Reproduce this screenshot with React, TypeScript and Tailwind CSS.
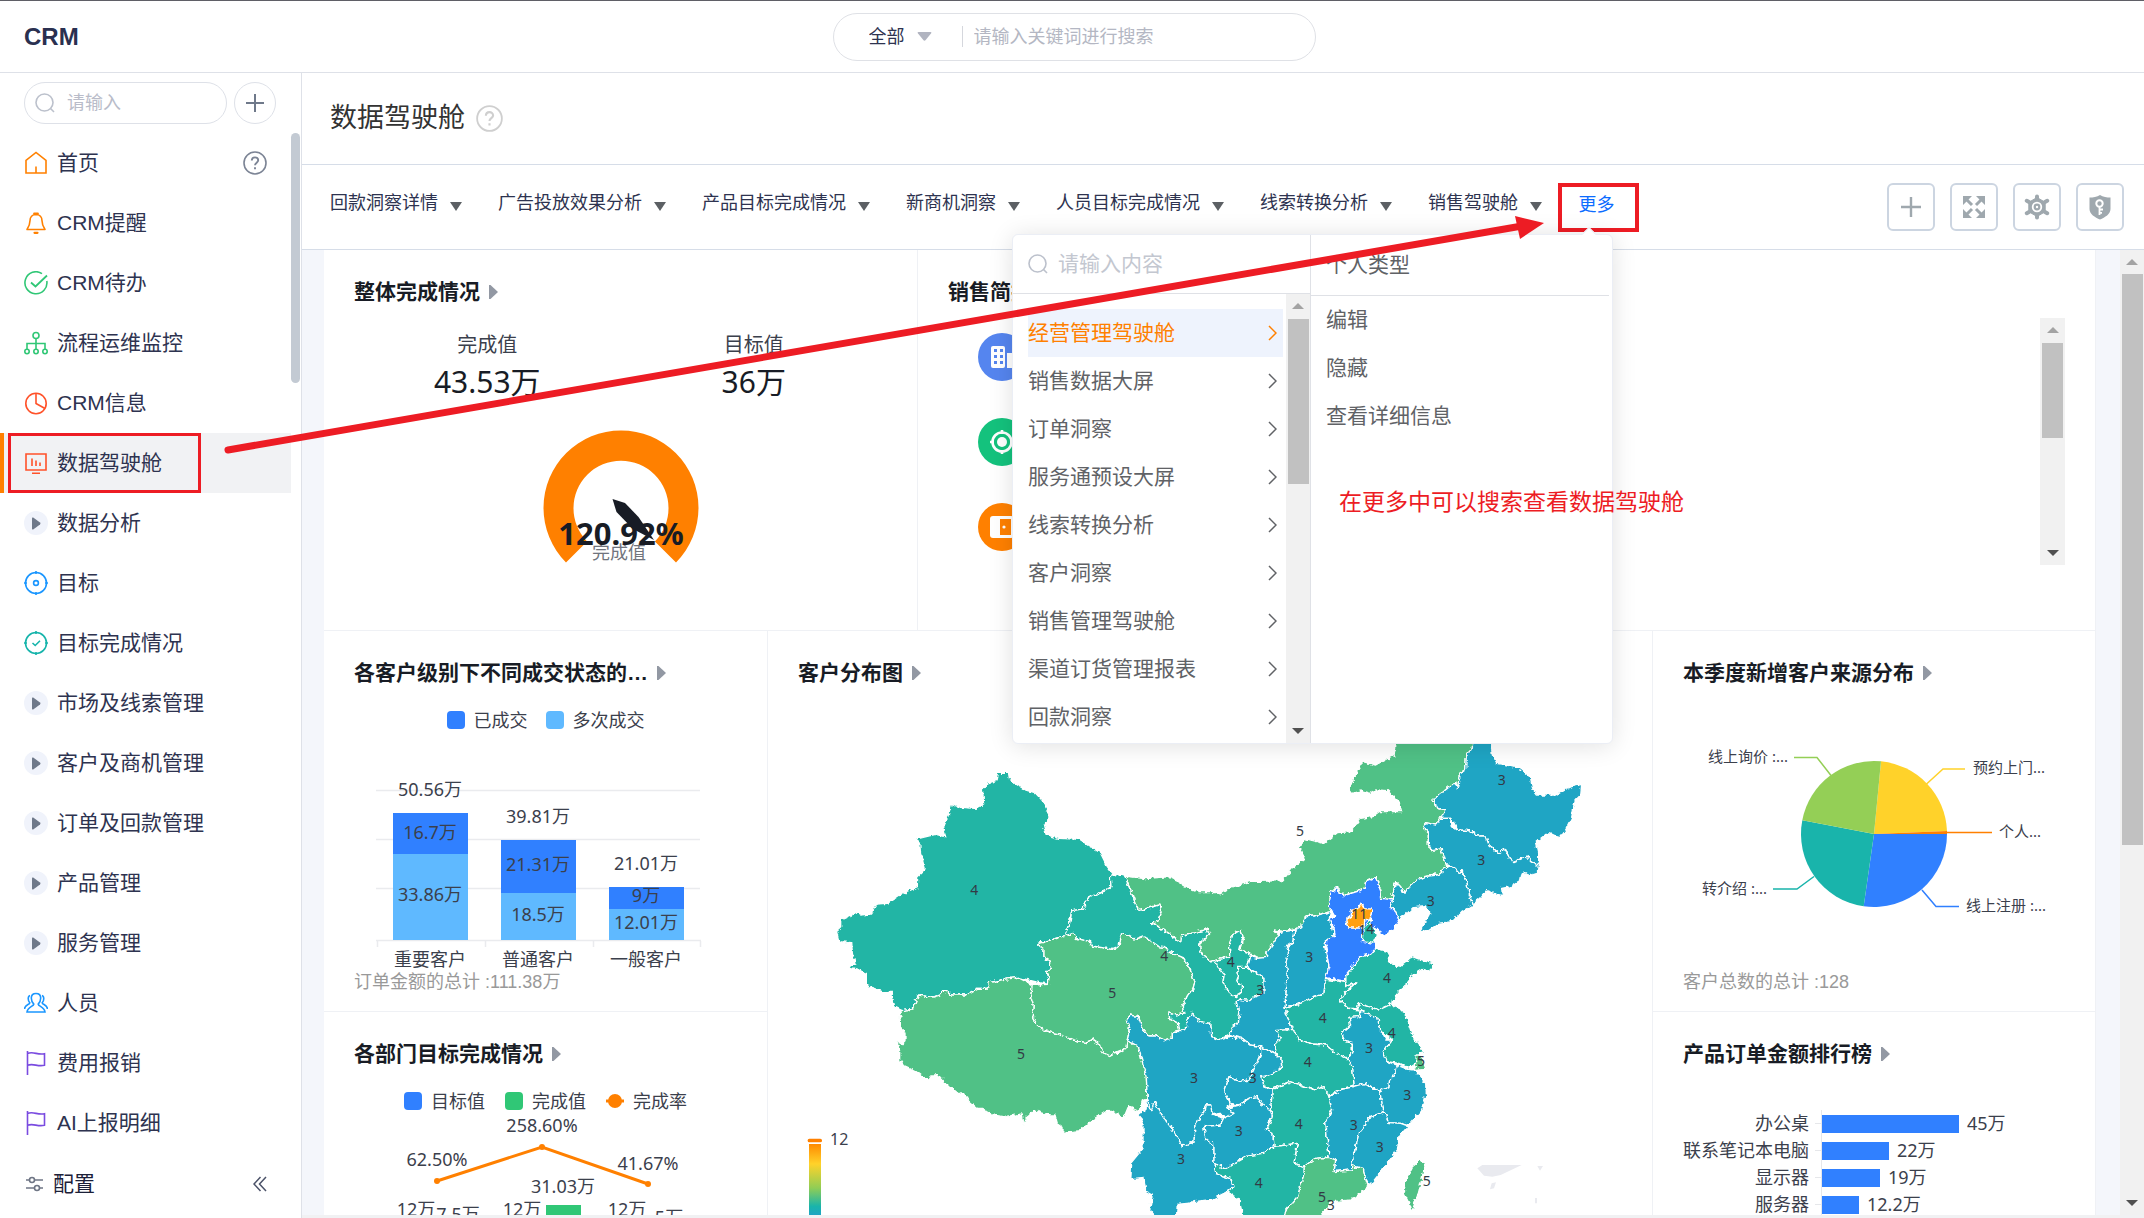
import type { ReactNode } from 'react';

type MenuItem = { label: string; icon: ReactNode; active?: boolean; help?: boolean };

const chartFont = "font-['Noto_Sans','Noto_Sans_CJK_SC',sans-serif]";

/* Icons */
function Stroke({ color, children }: { color: string; children: ReactNode }) {
  return (
    <svg width="24" height="24" viewBox="0 0 24 24" fill="none" stroke={color} strokeWidth="1.6" className="shrink-0">
      {children}
    </svg>
  );
}

const home = <Stroke color="#ff8000"><path d="M2 22V9.5L12 1.5l10 8V22H2ZM12 15.5V22" /></Stroke>;
const bell = (
  <Stroke color="#ff8000">
    <path d="M12 3.500c-3.800 0-6 2.800-6 6.300 0 4-1.200 6-3 8.700h18c-1.800-2.700-3-4.700-3-8.700 0-3.500-2.200-6.300-6-6.300Z" strokeLinejoin="round" />
    <path d="M10.200 2.600h3.600M10.500 21.800h3" strokeWidth="2.200" strokeLinecap="round" />
  </Stroke>
);
const check = (
  <Stroke color="#30c776">
    <path d="M18 2.600A11 11 0 1 0 22.800 10" />
    <path d="m7 11.500 4.500 4L23 4.500" strokeWidth="1.800" />
  </Stroke>
);
const flow = (
  <Stroke color="#30c776">
    <circle cx="12" cy="4.500" r="3" />
    <circle cx="3" cy="20.500" r="2.200" />
    <circle cx="12" cy="20.500" r="2.200" />
    <circle cx="21" cy="20.500" r="2.200" />
    <path d="M12 7.500v10.800M3 18.300V12.500h18v5.800" />
  </Stroke>
);
const pie = <Stroke color="#ff522a"><circle cx="12" cy="12.500" r="10.200" /><path d="M12 2.500v10l9 5" /></Stroke>;
const board = (
  <Stroke color="#ff522a">
    <path d="M2 3h20v16H2zM8 22.200h8M8 7.500v7.500M12 9.500v5.500M16 11.500v3.500" />
  </Stroke>
);
const target = (
  <Stroke color="#1a96ff">
    <circle cx="12" cy="12" r="10.500" />
    <circle cx="12" cy="12" r="2.400" />
    <path d="M12 0v3M12 21v3M0 12h3M21 12h3" />
  </Stroke>
);
const targetDone = (
  <Stroke color="#16b4ab">
    <circle cx="12" cy="12" r="10.500" />
    <path d="m8.500 12 2.700 2.500L16 9.700M12 0v3M12 21v3M0 12h3M21 12h3" />
  </Stroke>
);
const people = (
  <Stroke color="#1a96ff">
    <path d="M12 2.500c-3 0-4.700 2-4.700 4.600 0 2.700 1 4.600 2.500 6-.2 2.300-6.300 2.600-6.800 7.900h18c-.5-5.300-6.600-5.600-6.800-7.900 1.500-1.400 2.500-3.300 2.500-6 0-2.600-1.700-4.600-4.700-4.600Z" />
    <path d="M6 4.500C3.800 5 3.600 9.800 5.800 11.800 5.500 13.800.8 13.500.5 18M18 4.500c2.200.5 2.400 5.300.2 7.300.3 2 5 1.700 5.300 6.200" />
  </Stroke>
);
const flag = (
  <Stroke color="#7a4be0">
    <path d="M3.500 0v24M3.500 2.500c6-2.500 10 1.800 17 .2v11.500c-7 1.800-11-2.200-17 .1" />
  </Stroke>
);
const fold = (
  <span className="flex h-6 w-6 shrink-0 items-center justify-center rounded-full bg-[#f0f3fb]">
    <svg width="9" height="13" viewBox="0 0 9 13" fill="#6f798a"><path d="M0 1.200Q0 0 1.200.6L8 5.600q1 .9 0 1.800L1.200 12.400Q0 13 0 11.800Z" /></svg>
  </span>
);

function Help({ size, color }: { size: string; color: string }) {
  return (
    <svg className={size} viewBox="0 0 24 24" fill="none" stroke={color} strokeWidth="1.600">
      <circle cx="12" cy="12" r="11" />
      <path d="M8.800 9.600c0-4.400 6.400-4.200 6.400-.3 0 2.300-3.200 2.500-3.200 5M12 16.200v2" strokeWidth="1.900" />
    </svg>
  );
}

function SearchIcon() {
  return (
    <svg width="20" height="20" viewBox="0 0 20 20" fill="none" stroke="#bcc1cc" strokeWidth="1.600" className="shrink-0">
      <circle cx="9.500" cy="9.500" r="8.500" />
      <path d="m15.500 15.500 3.500 3.500" />
    </svg>
  );
}

function Caret({ dir, color }: { dir: 'up' | 'down'; color: string }) {
  return (
    <svg width="12" height="8" viewBox="0 0 12 8" fill={color} className="shrink-0">
      {dir === 'up' ? <path d="M0 7h12L6 1z" /> : <path d="M0 1h12L6 7z" />}
    </svg>
  );
}

const menu: MenuItem[] = [
  { label: '首页', icon: home, help: true },
  { label: 'CRM提醒', icon: bell },
  { label: 'CRM待办', icon: check },
  { label: '流程运维监控', icon: flow },
  { label: 'CRM信息', icon: pie },
  { label: '数据驾驶舱', icon: board, active: true },
  { label: '数据分析', icon: fold },
  { label: '目标', icon: target },
  { label: '目标完成情况', icon: targetDone },
  { label: '市场及线索管理', icon: fold },
  { label: '客户及商机管理', icon: fold },
  { label: '订单及回款管理', icon: fold },
  { label: '产品管理', icon: fold },
  { label: '服务管理', icon: fold },
  { label: '人员', icon: people },
  { label: '费用报销', icon: flag },
  { label: 'AI上报明细', icon: flag },
];

const tabs = ['回款洞察详情', '广告投放效果分析', '产品目标完成情况', '新商机洞察', '人员目标完成情况', '线索转换分析', '销售驾驶舱'];

const boards = ['经营管理驾驶舱', '销售数据大屏', '订单洞察', '服务通预设大屏', '线索转换分析', '客户洞察', '销售管理驾驶舱', '渠道订货管理报表', '回款洞察'];

const ranking = [
  { name: '办公桌', value: 45, text: '45万' },
  { name: '联系笔记本电脑', value: 22, text: '22万' },
  { name: '显示器', value: 19, text: '19万' },
  { name: '服务器', value: 12.2, text: '12.2万' },
];

function Sidebar() {
  return (
    <aside className="relative flex w-[302px] shrink-0 flex-col border-r border-[#dee1e8] bg-white">
      <div className="flex gap-[7px] pt-[9px] pl-6">
        <label className="flex h-[42px] w-[203px] items-center gap-3 rounded-full border border-[#dee1e8] pl-[10px]">
          <SearchIcon />
          <input
            aria-label="搜索菜单"
            placeholder="请输入"
            className="w-[120px] text-lg outline-none placeholder:text-[#b9bcc9]"
          />
        </label>
        <button aria-label="新增" className="flex h-[42px] w-[42px] items-center justify-center rounded-full border border-[#dee1e8]">
          <svg width="18" height="18" viewBox="0 0 18 18" stroke="#6f798a" strokeWidth="2"><path d="M9 0v18M0 9h18" /></svg>
        </button>
      </div>

      <nav className="mt-[9px] min-h-0 flex-1 overflow-hidden">
        {menu.map(m => (
          <a
            key={m.label}
            href="#"
            className={
              m.active
                ? 'relative mr-[10px] flex h-[60px] items-center gap-[9px] border-l-4 border-[#ff8000] bg-[#f1f2f4] pl-5 text-[21px] text-[#2e3350]'
                : 'flex h-[60px] items-center gap-[9px] pl-6 text-[21px] text-[#2e3350]'
            }
          >
            {m.icon}
            {m.label}
            {m.help && <span className="ml-auto pr-[34px]"><Help size="h-6 w-6" color="#7c8495" /></span>}
            {m.active && <span className="absolute inset-y-0 left-1 w-[193px] border-[3px] border-[#ed1c24]" />}
          </a>
        ))}
      </nav>

      <div className="flex h-[65px] shrink-0 items-center justify-between pr-[34px] pb-1 pl-[26px] text-[21px] text-[#1b2038]">
        <a href="#" className="flex items-center gap-[10px]">
          <svg width="17" height="16" viewBox="0 0 17 16" fill="none" stroke="#6f7685" strokeWidth="1.600">
            <circle cx="6" cy="4" r="2.500" />
            <circle cx="11" cy="12" r="2.500" />
            <path d="M0 4h3.500M8.500 4H17M0 12h8.500M13.500 12H17" />
          </svg>
          配置
        </a>
        <button aria-label="收起">
          <svg width="14" height="16" viewBox="0 0 14 16" fill="none" stroke="#4b5268" strokeWidth="1.500"><path d="M7.500 1 1 8l6.500 7M13 1 6.500 8l6.500 7" /></svg>
        </button>
      </div>
      <div className="absolute top-[60px] right-px h-[250px] w-[9px] rounded-full bg-[#c3cad3]" />
    </aside>
  );
}

function MorePanel() {
  return (
    <div className="absolute top-[47px] right-[22px] z-20 flex h-[510px] w-[601px] rounded-md border border-[#ebeef5] bg-white text-[21px] text-[#606266] shadow-[0_2px_24px_rgba(0,0,0,0.12)]">
      <span className="absolute -top-[6px] right-[18px] h-[10px] w-[10px] rotate-45 border-t border-l border-[#ebeef5] bg-white" />
      <div className="flex w-[298px] shrink-0 flex-col border-r border-[#dfe1e6]">
        <label className="flex h-[59px] shrink-0 items-center gap-[10px] border-b border-[#dfe1e6] pl-[15px]">
          <SearchIcon />
          <input aria-label="搜索驾驶舱" placeholder="请输入内容" className="w-[200px] outline-none placeholder:text-[#c3c7d0]" />
        </label>
        <div className="flex min-h-0 flex-1">
          <ul className="flex-1 pt-[15px] pr-[3px] pl-[15px]">
            {boards.map((b, i) => (
              <li key={b}>
                <button
                  className={
                    i === 0
                      ? 'flex h-12 w-full items-center justify-between bg-[#eef3fd] pr-[6px] text-[#ff8000]'
                      : 'flex h-12 w-full items-center justify-between pr-[6px]'
                  }
                >
                  {b}
                  <svg width="9" height="16" viewBox="0 0 9 16" fill="none" stroke="currentColor" strokeWidth="1.500"><path d="m1 1 7 7-7 7" /></svg>
                </button>
              </li>
            ))}
          </ul>
          <div className="flex w-[24px] flex-col items-center bg-[#f1f1f1] py-2">
            <Caret dir="up" color="#a3a3a3" />
            <div className="mt-[9px] h-[165px] w-[21px] bg-[#c1c1c1]" />
            <div className="mt-auto flex"><Caret dir="down" color="#505050" /></div>
          </div>
        </div>
      </div>
      <div className="min-w-0 flex-1 pr-[3px]">
        <div className="flex h-[61px] items-center border-b border-[#dfe1e6] pl-[15px]">个人类型</div>
        <ul className="pl-[15px]">
          {['编辑', '隐藏', '查看详细信息'].map(t => (
            <li key={t} className="flex h-12 items-center">{t}</li>
          ))}
        </ul>
        <p className="mt-[46px] ml-7 text-[23px] leading-8 whitespace-nowrap text-[#ed1c24]">在更多中可以搜索查看数据驾驶舱</p>
      </div>
    </div>
  );
}

function Toolbar() {
  const box = 'flex h-12 w-12 items-center justify-center rounded-md border-2 border-[#ccd5e1]';
  return (
    <div className="ml-auto flex gap-[15px] pr-5">
      <button aria-label="新建" className={box}>
        <svg width="22" height="22" viewBox="0 0 22 22" stroke="#9fa8ae" strokeWidth="2.400"><path d="M11 1v20M1 11h20" /></svg>
      </button>
      <button aria-label="全屏" className={box}>
        <svg width="22" height="22" viewBox="0 0 22 22" fill="#9fa8ae" stroke="#9fa8ae" strokeWidth="3">
          <path d="m4 4 5 5M18 4l-5 5M4 18l5-5M18 18l-5-5" />
          <path d="M0 0h9L0 9zM22 0v9l-9-9zM0 22v-9l9 9zM22 22h-9l9-9z" stroke="none" />
        </svg>
      </button>
      <button aria-label="设置" className={box}>
        <svg width="26" height="26" viewBox="-13 -13 26 26" fill="none" stroke="#9fa8ae">
          <path d="M0-9.500 8.200-4.700V4.700L0 9.500-8.200 4.700V-4.700Z" fill="#9fa8ae" strokeWidth="1" strokeLinejoin="round" />
          <path d="M0-8v-2.500M0 8v2.500M-8-5l-2.200-1.200M8 5l2.200 1.200M8-5l2.200-1.200M-8 5l-2.200 1.200" strokeWidth="4" strokeLinecap="round" />
          <circle r="4.300" stroke="#fff" strokeWidth="1.800" />
          <circle r="1.200" fill="#fff" stroke="none" />
        </svg>
      </button>
      <button aria-label="权限" className={box}>
        <svg width="24" height="26" viewBox="0 0 24 26">
          <path d="M12 1c3 2 7 2.600 10.500 2.600v11.400c0 5-5.500 8.500-10.500 10.500C7 23.500 1.500 20 1.500 15V3.600C5 3.600 9 3 12 1Z" fill="#9fa8ae" />
          <circle cx="11.500" cy="9.500" r="3.200" fill="none" stroke="#fff" strokeWidth="2" />
          <path d="M11.500 12v9M12 15.500h3M12 18.800h2" stroke="#fff" strokeWidth="1.800" />
        </svg>
      </button>
    </div>
  );
}

function CardTitle({ children }: { children: ReactNode }) {
  return (
    <h2 className="flex items-center gap-[9px] text-[21px] leading-8 font-bold whitespace-nowrap text-[#181c25]">
      {children}
      <svg width="9" height="14" viewBox="0 0 9 14" fill="#9298a3"><path d="M0 0h1.500L9 7l-7.500 7H0z" /></svg>
    </h2>
  );
}

function Card({ title, children }: { title: string; children?: ReactNode }) {
  return (
    <section className="h-[381px] border-r border-b border-[#eff1f5] bg-white px-[30px] pt-[26px]">
      <CardTitle>{title}</CardTitle>
      {children}
    </section>
  );
}

function Swatch({ color, label }: { color: string; label: string }) {
  return (
    <span className="flex items-center gap-[9px]">
      <span className={`h-[18px] w-[18px] rounded ${color}`} />
      {label}
    </span>
  );
}

function Gauge() {
  return (
    <svg width="200" height="170" viewBox="0 0 200 170" className={`mx-auto mt-[10px] block ${chartFont}`} textAnchor="middle">
      <path d="M45 150.500A77.500 77.500 0 1 1 155 150.500L133.900 129.400A47.500 47.500 0 1 0 66.100 129.400Z" fill="#ff8000" />
      <path d="M91.500 87 104 91 117.500 105 133 128 112 117 95.500 100Z" fill="#181c25" />
      <text x="98" y="147" fontSize="18" fill="#70747d">完成值</text>
      <text x="100" y="133" fontSize="31" fontWeight="bold" fill="#181c25">120.92%</text>
    </svg>
  );
}

const stacks = [
  { x: 393, top: 813, split: 854, labels: [['50.56万', 796], ['16.7万', 839], ['33.86万', 901], ['重要客户', 966]] },
  { x: 501, top: 840, split: 893, labels: [['39.81万', 823], ['21.31万', 871], ['18.5万', 921], ['普通客户', 966]] },
  { x: 609, top: 887, split: 909, labels: [['21.01万', 870], ['9万', 902], ['12.01万', 929], ['一般客户', 966]] },
] as const;

function StackedBars() {
  return (
    <svg width="383" height="238" viewBox="354 732 383 238" fontSize="18" textAnchor="middle" className={`mx-auto block ${chartFont}`}>
      <path d="M376 790.500h324M376 839.500h324M376 888.500h324M376 940.500h325M377.500 941v6M485.500 941v6M593.500 941v6M700.500 941v6" stroke="#eaebee" strokeWidth="1.500" />
      {stacks.map(s => (
        <g key={s.x}>
          <rect x={s.x} y={s.top} width="75" height={s.split - s.top} fill="#3080ff" />
          <rect x={s.x} y={s.split} width="75" height={940 - s.split} fill="#5fb9ff" />
          {s.labels.map(([t, y]) => (
            <text key={t} x={s.x + 37} y={y} fill="#3b404c">{t}</text>
          ))}
        </g>
      ))}
    </svg>
  );
}

function DepartmentChart() {
  return (
    <svg width="383" height="140" viewBox="354 1114 383 140" fontSize="18" textAnchor="middle" className={`mx-auto block ${chartFont}`}>
      <rect x="546" y="1206" width="35" height="48" fill="#30c776" />
      <path d="m437 1182 105-34 106 37" fill="none" stroke="#ff8000" strokeWidth="3" />
      <g fill="#ff8000"><circle cx="437" cy="1182" r="3" /><circle cx="542" cy="1148" r="3" /><circle cx="648" cy="1185" r="3" /></g>
      <g fill="#3b404c">
        <text x="542" y="1133">258.60%</text>
        <text x="437" y="1167">62.50%</text>
        <text x="648" y="1171">41.67%</text>
        <text x="563" y="1194">31.03万</text>
        <text x="416" y="1217">12万</text>
        <text x="458" y="1222">7.5万</text>
        <text x="522" y="1217">12万</text>
        <text x="627" y="1217">12万</text>
        <text x="669" y="1225">5万</text>
      </g>
    </svg>
  );
}

function SourcePie() {
  return (
    <svg width="382" height="281" viewBox="1684 689 382 281" fontSize="15" fill="#3b404c" className={`mx-auto block ${chartFont}`}>
      <path d="M1875 834 1882 761.300A73 73 0 0 1 1948 831Z" fill="#ffd22a" />
      <path d="M1875 834 1948 831V834Z" fill="#ff8000" />
      <path d="M1875 834H1948A73 73 0 0 1 1864.700 906.300Z" fill="#3080ff" />
      <path d="M1875 834 1864.700 906.300A73 73 0 0 1 1803.300 820.300Z" fill="#19b4ab" />
      <path d="M1875 834 1803.300 820.300A73 73 0 0 1 1882 761.300Z" fill="#94cf56" />
      <g fill="none" strokeWidth="1.500">
        <path d="M1795 757.500h23l14 18" stroke="#94cf56" />
        <path d="M1966 769h-22l-17 15.500" stroke="#ffd22a" />
        <path d="M1948 832.500h45" stroke="#ff8000" />
        <path d="M1774 889h24l17-12.500" stroke="#19b4ab" />
        <path d="m1923 890 14 16.500h23" stroke="#3080ff" />
      </g>
      <text x="1709" y="762">线上询价 :...</text>
      <text x="1974" y="773">预约上门...</text>
      <text x="2000" y="837">个人...</text>
      <text x="1703" y="894">转介绍 :...</text>
      <text x="1967" y="911">线上注册 :...</text>
    </svg>
  );
}

/* Customer count per province, shaded by value */
const C3 = '#1fa5c4';
const C4 = '#22b5a5';
const C5 = '#50c186';

const provinces: [string, string][] = [
  [C4, '-544,127 -512,126 -508,150 -480,168 -460,180 -432,188 -410,212 -392,245 -394,275 -405,295 -398,315 -360,325 -300,328 -270,348 -236,368 -215,410 -198,432 -206,442 -204,470 -220,482 -240,490 -270,500 -290,538 -322,542 -328,580 -342,610 -340,616 -424,642 -408,655 -408,680 -390,692 -382,715 -400,725 -390,742 -392,763 -428,756 -484,742 -525,748 -568,758 -575,775 -605,775 -640,795 -685,795 -705,778 -718,795 -740,802 -782,795 -800,838 -830,842 -856,830 -864,795 -860,787 -885,787 -915,775 -938,768 -938,730 -960,720 -992,710 -972,702 -980,670 -982,638 -1020,635 -1028,602 -1015,590 -1015,570 -960,545 -955,555 -925,552 -908,522 -875,520 -830,490 -785,470 -784,438 -765,420 -765,410 -775,375 -778,340 -792,328 -730,313 -700,320 -708,295 -695,265 -682,220 -655,232 -612,235 -586,222 -590,175 -575,160 -550,152'],
  [C5, '-838,860 -835,885 -822,910 -822,935 -830,943 -848,933 -838,960 -838,990 -828,1005 -795,1020 -752,1052 -745,1038 -720,1038 -700,1060 -660,1092 -642,1092 -635,1110 -605,1135 -585,1135 -575,1148 -560,1155 -525,1160 -470,1152 -465,1188 -458,1160 -435,1142 -390,1155 -372,1155 -365,1180 -348,1192 -348,1207 -295,1202 -260,1170 -215,1140 -165,1162 -152,1130 -120,1145 -110,1110 -96,1105 -98,1040 -110,995 -108,985 -122,950 -155,930 -160,955 -185,970 -205,975 -228,968 -235,945 -260,928 -275,938 -315,930 -360,912 -402,902 -425,885 -440,860 -437,825 -445,800 -440,765 -484,742 -525,748 -568,758 -575,775 -605,775 -640,795 -685,795 -705,778 -718,795 -740,802 -782,795 -800,838 -830,842'],
  [C5, '-424,642 -340,616 -315,610 -308,625 -265,635 -260,648 -200,658 -180,650 -172,608 -132,628 -105,618 -60,650 -45,652 -20,670 15,685 32,715 48,755 42,775 25,798 10,828 15,852 -10,855 -30,846 -28,865 -2,880 2,900 -20,905 -20,925 -40,932 -70,918 -90,918 -110,892 -122,860 -145,855 -158,870 -148,890 -155,930 -160,955 -185,965 -205,978 -228,968 -235,945 -260,928 -275,938 -315,930 -360,912 -402,902 -425,885 -440,860 -437,825 -445,800 -440,765 -392,763 -390,742 -400,725 -382,715 -390,692 -408,680 -408,655'],
  [C4, '-198,432 -162,438 -142,490 -122,542 -60,525 -53,545 -65,575 -85,575 -30,610 5,635 8,615 45,608 85,597 92,612 62,640 65,668 95,695 107,695 120,715 135,735 132,760 150,785 172,800 190,785 190,765 172,755 178,738 175,712 205,712 235,732 255,742 255,790 222,803 212,812 178,808 172,820 182,850 178,880 160,890 152,915 120,930 98,920 95,880 60,875 42,850 25,865 22,895 0,905 2,900 -2,880 -28,865 -30,846 -10,855 15,852 10,828 25,798 42,775 48,755 32,715 15,685 -20,670 -45,652 -60,650 -105,618 -132,628 -172,608 -180,650 -200,658 -260,648 -265,635 -308,625 -315,610 -340,616 -342,610 -328,580 -322,542 -290,538 -270,500 -240,490 -220,482 -204,470 -206,442'],
  [C5, '-162,438 -100,446 -30,440 5,455 12,466 60,485 100,485 120,493 160,470 215,455 310,452 345,410 378,385 360,355 375,325 435,340 475,308 515,305 545,265 580,260 600,245 668,245 660,215 625,182 590,180 575,190 550,183 520,190 510,178 530,130 552,95 590,105 645,75 650,55 650,30 882,30 880,55 862,75 860,120 845,130 835,175 830,155 762,210 780,240 800,238 785,265 770,285 740,278 732,290 748,305 748,345 758,362 785,355 800,400 805,415 775,435 735,440 705,455 672,490 665,470 650,455 645,475 640,510 608,505 605,480 590,443 560,455 555,478 500,495 480,490 475,470 455,490 455,545 405,558 382,560 365,590 345,600 315,605 285,600 298,615 265,665 262,682 235,685 215,672 182,660 192,620 185,600 160,615 152,640 152,680 95,695 65,668 62,640 92,612 85,597 45,608 8,615 5,635 -30,610 -85,575 -65,575 -53,545 -60,525 -122,542 -142,490'],
  [C3, '882,30 935,30 940,75 952,100 985,105 1020,115 1055,145 1062,178 1075,195 1130,195 1160,175 1208,163 1205,195 1188,212 1178,265 1160,300 1145,320 1105,310 1072,335 1080,370 1078,405 1055,392 1045,378 1005,395 992,388 978,355 960,370 930,345 920,318 895,318 872,302 835,300 815,265 785,265 800,238 780,240 762,210 830,155 835,175 845,130 860,120 862,75 880,55'],
  [C3, '785,265 815,265 820,290 835,300 872,302 895,318 920,318 930,345 960,370 978,355 992,388 1005,395 1045,378 1055,392 1078,405 1075,430 1050,438 1030,425 1025,450 995,470 968,475 970,497 945,490 922,482 905,505 880,525 870,490 862,450 848,420 840,430 815,405 800,400 785,355 758,362 748,345 748,305 732,290 740,278 770,285'],
  [C3, '805,410 815,405 840,430 848,420 862,450 870,490 880,525 845,548 820,575 780,580 745,605 725,600 752,550 735,527 705,530 680,555 660,568 650,545 632,530 640,510 645,475 650,455 665,470 672,490 705,455 735,440 775,435'],
  [C3, '455,545 450,570 462,590 465,615 435,640 450,710 440,742 435,790 405,800 365,820 318,832 325,720 320,700 330,660 325,650 340,640 348,600 365,590 382,560 405,558'],
  [C3, '348,600 340,640 325,650 330,660 320,700 325,720 318,832 325,860 342,898 290,902 305,925 290,940 290,970 245,950 215,945 190,925 152,915 160,890 178,880 182,850 172,820 178,808 212,812 222,803 255,790 255,742 205,712 215,680 235,685 262,682 265,665 298,615 315,605'],
  [C4, '95,695 152,680 152,640 160,615 185,600 192,620 182,660 215,672 205,712 175,712 178,738 172,755 190,765 190,785 165,800 150,785 132,760 135,735 120,715 107,695'],
  [C4, '500,735 545,680 575,672 590,655 630,665 632,695 655,712 700,680 735,693 762,700 755,722 730,718 695,740 690,760 660,785 640,810 638,822 600,840 570,830 540,820 535,835 510,835 482,810 495,790 530,758 500,770'],
  ['#3080ff', '455,490 475,470 480,490 500,495 555,478 560,455 590,443 605,480 608,505 640,510 632,530 650,545 660,568 640,600 610,618 600,600 585,590 582,615 590,640 590,655 575,672 545,680 500,735 500,755 440,742 450,710 440,650 435,640 465,615 462,590 450,570 468,560 450,530'],
  [C4, '440,748 500,757 500,770 530,758 495,790 482,810 510,835 540,840 545,860 510,862 515,885 488,910 500,935 520,940 520,965 505,985 470,970 440,945 400,942 360,930 342,898 325,860 318,832 365,820 405,800 435,790'],
  [C4, '535,835 540,820 570,830 600,840 638,822 680,850 705,925 738,970 720,970 712,1000 690,1015 660,1000 625,995 612,965 640,930 605,900 595,862 555,850'],
  [C3, '545,835 555,850 595,862 605,900 620,930 640,930 612,965 625,995 655,1005 650,1030 632,1050 630,1070 602,1085 560,1060 525,1070 520,1010 505,985 520,965 520,940 500,935 488,910 515,885 510,862 545,860'],
  [C5, '712,975 725,975 740,1015 708,1018'],
  [C4, '290,902 342,898 360,930 400,942 440,945 470,970 505,985 520,1010 525,1065 480,1080 445,1100 435,1070 410,1080 375,1068 335,1055 280,1078 255,1070 248,1040 285,1030 308,1010 305,985 290,970 290,940 305,925'],
  [C3, '-155,930 -148,890 -158,870 -145,855 -122,860 -110,892 -90,918 -70,918 -40,932 -20,925 -20,905 0,905 22,895 25,865 42,850 60,875 95,880 98,920 120,930 152,920 190,925 215,945 245,950 245,975 210,1050 180,1055 150,1040 135,1080 155,1120 145,1135 165,1150 150,1165 125,1150 100,1155 95,1125 80,1125 75,1145 48,1185 45,1235 10,1248 -15,1205 -45,1165 -75,1115 -85,1145 -95,1105 -98,1040 -110,995 -122,950'],
  [C3, '245,950 290,972 305,985 308,1010 285,1030 248,1040 255,1070 280,1080 275,1140 250,1125 235,1100 210,1105 180,1125 155,1120 135,1080 150,1040 180,1055 210,1050 245,975'],
  [C3, '-95,1105 -85,1145 -75,1115 -45,1165 -15,1205 10,1248 45,1235 48,1185 75,1145 80,1125 95,1125 100,1155 135,1165 125,1185 75,1190 80,1225 105,1245 105,1300 110,1330 155,1345 162,1370 145,1385 100,1408 45,1415 -5,1420 -8,1470 -60,1470 -88,1440 -80,1395 -100,1385 -105,1345 -148,1350 -145,1300 -108,1255 -108,1170 -125,1150 -100,1145'],
  [C3, '165,1150 145,1135 180,1125 210,1105 235,1100 250,1125 275,1140 280,1160 262,1200 282,1210 285,1250 250,1270 200,1280 165,1300 140,1318 105,1300 105,1245 80,1225 75,1190 125,1185 135,1165'],
  [C4, '280,1078 335,1055 375,1068 410,1080 435,1070 450,1100 458,1140 440,1175 450,1280 410,1285 375,1310 345,1300 355,1240 320,1245 285,1250 282,1210 262,1200 280,1160 275,1140'],
  [C3, '450,1100 480,1080 525,1070 560,1060 602,1085 615,1145 565,1165 560,1185 540,1210 525,1270 518,1320 465,1325 470,1290 450,1280 440,1175 458,1140'],
  [C3, '655,1005 690,1018 708,1020 740,1060 742,1090 728,1140 688,1188 665,1180 630,1178 615,1145 602,1085 630,1070 632,1050 650,1030'],
  [C3, '615,1145 630,1178 665,1180 688,1188 660,1220 655,1260 610,1320 572,1368 560,1345 552,1315 518,1308 525,1270 540,1210 560,1185 565,1165'],
  [C5, '450,1282 470,1290 465,1325 518,1320 518,1308 552,1315 560,1345 568,1368 520,1410 460,1415 430,1450 420,1470 310,1470 320,1440 355,1400 375,1330 375,1310 410,1285'],
  [C4, '105,1300 140,1318 165,1300 200,1280 250,1270 285,1250 320,1245 355,1240 345,1300 375,1310 375,1330 355,1400 320,1440 315,1470 195,1470 180,1410 145,1385 162,1370 155,1345 110,1330'],
  ['#ffa010', '547,518 557,536 580,537 572,568 554,574 552,594 506,594 500,568 518,557 516,541 536,536'],
  [C4, '578,562 575,580 585,595 592,615 584,640 550,634 552,600 565,580'],
  [C5, '725,1290 740,1300 728,1350 718,1390 698,1447 690,1420 675,1390 680,1350 700,1310'],
];

const counts: [number, number, number][] = [
  [5, 363, 303], [3, 968, 150], [3, 907, 390], [3, 755, 513], [11, 541, 553], [1, 550, 600], [4, 574, 597],
  [4, 155, 697], [3, 244, 780], [3, 391, 680], [4, 624, 743], [4, 431, 865], [4, 638, 910], [3, 570, 955],
  [4, 386, 997], [5, 726, 992], [3, 221, 1045], [3, 45, 1045], [3, 685, 1094], [3, 179, 1203], [4, 359, 1183],
  [3, 524, 1186], [3, 602, 1252], [4, 239, 1360], [3, 6, 1288], [5, 743, 1352], [5, 429, 1402], [3, 455, 1425],
  [4, -614, 480], [4, -44, 678], [5, -200, 790], [5, -474, 971],
];

function CustomerMap() {
  return (
    <svg width="884" height="526" viewBox="-1233 -123 2652 1578" className={`mx-auto block ${chartFont}`}>
      <defs>
        <linearGradient id="scale" x1="0" y1="0" x2="0" y2="1">
          <stop offset="0" stopColor="#ff8a00" />
          <stop offset="0.28" stopColor="#ffd22a" />
          <stop offset="0.62" stopColor="#90cd55" />
          <stop offset="0.88" stopColor="#19b4ab" />
          <stop offset="1" stopColor="#1fa5c4" />
        </linearGradient>
        <filter id="coast" x="-2%" y="-2%" width="104%" height="104%" colorInterpolationFilters="sRGB">
          <feTurbulence type="fractalNoise" baseFrequency="0.08" numOctaves="2" seed="4" />
          <feDisplacementMap in="SourceGraphic" scale="16" xChannelSelector="R" yChannelSelector="G" />
        </filter>
      </defs>
      <g filter="url(#coast)" stroke="#fff" strokeWidth="4" strokeLinejoin="round">
        {provinces.map(([fill, points]) => (
          <polygon key={points} points={points} fill={fill} />
        ))}
      </g>
      <path d="M895 1315 910 1305H1028L965 1335 940 1340 915 1337ZM1075 1308h17l-9 14ZM933 1378l5-18 13-3-6 18ZM1068 1404h6v16h-6Z" fill="#e9eaef" />
      <g fontSize="42" fill="#333a45" textAnchor="middle">
        {counts.map(([n, x, y]) => (
          <text key={`${x}-${y}`} x={x} y={y + 15}>{n}</text>
        ))}
      </g>
      <rect x="-1114" y="1226" width="43" height="11" rx="5" fill="#ff8000" />
      <rect x="-1110" y="1242" width="36" height="213" fill="url(#scale)" />
      <text x="-1047" y="1244" fontSize="48" fill="#3b404c">12</text>
    </svg>
  );
}

function Brief() {
  return (
    <div className="flex justify-between">
      <div className="mt-[25px] flex flex-col gap-[37px] pl-[30px]">
        <span className="flex h-12 w-12 items-center justify-center rounded-full bg-[#5585ef]">
          <svg width="24" height="24" viewBox="0 0 24 24">
            <rect x="1" y="1" width="14" height="22" rx="2" fill="#fff" />
            <path d="M17 8h5q1 0 1 1v13q0 1-1 1h-5z" fill="#fff" />
            <path d="M4 4h3v3H4zM10 4h3v3h-3zM4 10h3v3H4zM10 10h3v3h-3zM4 16h3v3H4zM10 16h3v3h-3z" fill="#5585ef" />
          </svg>
        </span>
        <span className="flex h-12 w-12 items-center justify-center rounded-full bg-[#14c27d]">
          <svg width="26" height="26" viewBox="0 0 26 26" fill="none" stroke="#fff" strokeWidth="2.600">
            <circle cx="13" cy="13" r="9.500" />
            <circle cx="13" cy="13" r="5" fill="#fff" stroke="none" />
            <path d="M13 1v4M13 21v4M1 13h4M21 13h4" />
          </svg>
        </span>
        <span className="flex h-12 w-12 items-center justify-center rounded-full bg-[#ff8000]">
          <svg width="24" height="22" viewBox="0 0 24 22">
            <rect width="24" height="22" rx="3" fill="#fff" />
            <path d="M10 3h11v16H10z" fill="#ff8000" />
            <circle cx="14" cy="11" r="1.600" fill="#fff" />
          </svg>
        </span>
      </div>
      <div className="mt-[10px] flex h-[247px] w-[25px] flex-col items-center bg-[#f1f1f1] py-2">
        <Caret dir="up" color="#a3a3a3" />
        <div className="mt-[9px] h-[95px] w-[21px] bg-[#c1c1c1]" />
        <div className="mt-auto flex"><Caret dir="down" color="#505050" /></div>
      </div>
    </div>
  );
}

function Dashboard() {
  return (
    <div className="min-w-0 flex-1 overflow-hidden bg-[#f4f6fb] pr-6 pl-[22px]">
      <div className="grid grid-cols-[594fr_1178fr]">
        <Card title="整体完成情况">
          <dl className={`mt-[22px] grid grid-cols-2 text-center text-[#181c25] ${chartFont}`}>
            <div>
              <dt className="text-xl leading-[30px] text-[#3b404c]">完成值</dt>
              <dd className="mt-[2px] text-3xl leading-10">43.53万</dd>
            </div>
            <div>
              <dt className="text-xl leading-[30px] text-[#3b404c]">目标值</dt>
              <dd className="mt-[2px] text-3xl leading-10">36万</dd>
            </div>
          </dl>
          <Gauge />
        </Card>
        <Card title="销售简报"><Brief /></Card>
      </div>
      <div className="grid grid-cols-[446fr_885fr_441fr]">
        <div>
          <Card title="各客户级别下不同成交状态的…">
            <div className={`mt-[19px] flex justify-center gap-[18px] text-lg leading-6 text-[#3b404c] ${chartFont}`}>
              <Swatch color="bg-[#3080ff]" label="已成交" />
              <Swatch color="bg-[#5fb9ff]" label="多次成交" />
            </div>
            <StackedBars />
            <p className="text-lg leading-6 text-[#999]">订单金额的总计 :111.38万</p>
          </Card>
          <Card title="各部门目标完成情况">
            <div className={`mt-[19px] flex justify-center gap-5 text-lg leading-6 text-[#3b404c] ${chartFont}`}>
              <Swatch color="bg-[#3080ff]" label="目标值" />
              <Swatch color="bg-[#30c776]" label="完成值" />
              <span className="flex items-center gap-[9px]">
                <svg width="18" height="14" viewBox="0 0 18 14" fill="#ff8000"><path d="M0 5.500h18v3H0z" /><circle cx="9" cy="7" r="7" /></svg>
                完成率
              </span>
            </div>
            <DepartmentChart />
          </Card>
        </div>
        <section className="border-r border-[#eff1f5] bg-white pt-[26px]">
          <div className="pl-[30px]"><CardTitle>客户分布图</CardTitle></div>
          <CustomerMap />
        </section>
        <div>
          <Card title="本季度新增客户来源分布">
            <SourcePie />
            <p className="text-lg leading-6 text-[#999]">客户总数的总计 :128</p>
          </Card>
          <Card title="产品订单金额排行榜">
            <ul className={`mt-10 text-lg text-[#3b404c] ${chartFont}`}>
              {ranking.map(r => (
                <li key={r.name} className="flex h-[27px] items-center leading-[27px]">
                  <span className="w-[126px] text-right whitespace-nowrap">{r.name}</span>
                  <span className="ml-[6px] h-px w-[6px] bg-[#e6e7ea]" />
                  <span className="flex h-full items-center border-l border-[#e6e7ea]">
                    <span className="h-[18px] bg-[#3080ff]" style={{ width: Math.round(r.value * 3.04) }} />
                  </span>
                  <span className="ml-2">{r.text}</span>
                </li>
              ))}
            </ul>
          </Card>
        </div>
      </div>
    </div>
  );
}

export default function App() {
  return (
    <div className="relative flex h-screen flex-col overflow-hidden border-t border-[#5f5f66] bg-white font-['Liberation_Sans','Noto_Sans_CJK_SC',sans-serif]">
      {/* Header */}
      <header className="flex h-[72px] shrink-0 items-center border-b border-[#dee1e8]">
        <h1 className="flex-1 pl-6 text-2xl font-bold text-[#2a3050]">CRM</h1>
        <div className="flex h-12 w-[483px] items-center rounded-full border border-[#dfe1e6] pl-[35px] text-lg">
          <div className="relative flex items-center">
            <select aria-label="搜索范围" className="w-[63px] appearance-none text-[#2e3350] outline-none">
              <option>全部</option>
            </select>
            <svg width="15" height="9" viewBox="0 0 15 9" fill="#b1b4c0" className="pointer-events-none absolute right-0"><path d="M1.500 0h12Q15 0 14 1.500L8.700 8q-1.200 1.400-2.400 0L1 1.500Q0 0 1.500 0Z" /></svg>
          </div>
          <span className="ml-[30px] h-[21px] w-px bg-[#d5d7dd]" />
          <input aria-label="搜索" placeholder="请输入关键词进行搜索" className="ml-[11px] w-[300px] outline-none placeholder:text-[#b4b7c3]" />
        </div>
        <div className="flex-1 pl-5" />
      </header>

      <div className="flex min-h-0 flex-1">
        <Sidebar />
        <main className="flex min-w-0 flex-1 flex-col">
          <div className="flex h-[92px] shrink-0 items-center gap-[11px] border-b border-[#d6dde8] pl-7 text-[27px] text-[#333]">
            数据驾驶舱
            <Help size="h-[27px] w-[27px]" color="#cfcfcf" />
          </div>

          {/* Board tabs */}
          <div className="flex h-[85px] shrink-0 items-center border-b border-[#d6dde8] pl-7">
            <div className="flex gap-9 pb-2 text-lg text-[#2e3350]">
              {tabs.map(t => (
                <button key={t} className="flex items-center gap-3 whitespace-nowrap">
                  {t}
                  <svg width="12" height="9" viewBox="0 0 12 9" fill="#5c6064" className="mt-[6px]"><path d="M0 0h12L6 9z" /></svg>
                </button>
              ))}
            </div>
            <div className="relative ml-4 h-[49px] w-[81px] shrink-0 border-4 border-[#ed1c24]">
              <button className="h-full w-full pr-1 pb-1 text-lg text-[#0c6cff]">更多</button>
              <MorePanel />
            </div>
            <Toolbar />
          </div>

          <div className="flex min-h-0 flex-1">
            <Dashboard />
            <div className="flex w-6 shrink-0 flex-col items-center bg-[#f1f1f1] py-2">
              <Caret dir="up" color="#a3a3a3" />
              <div className="mt-[8px] h-[571px] w-[21px] bg-[#c1c1c1]" />
              <div className="mt-auto flex"><Caret dir="down" color="#505050" /></div>
            </div>
          </div>
          <div className="h-[3px] shrink-0 bg-[#f1f1f3]" />
        </main>
      </div>

      {/* Arrow from the menu entry to the tab */}
      <svg width="1330" height="250" viewBox="220 210 1330 250" className="pointer-events-none absolute top-[209px] left-[220px] z-30">
        <path d="M228 450 1522 226" stroke="#ed1c24" strokeWidth="7" strokeLinecap="round" />
        <path d="M1515 216 1544 223 1520 239Z" fill="#ed1c24" />
      </svg>
    </div>
  );
}
